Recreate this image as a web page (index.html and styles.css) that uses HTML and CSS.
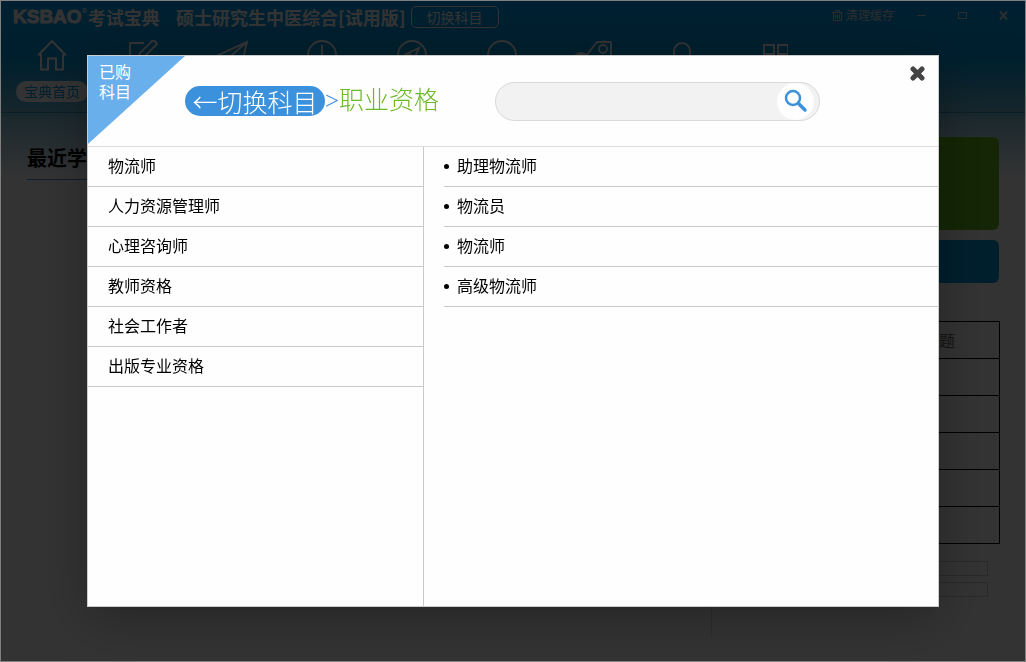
FILE: index.html
```html
<!DOCTYPE html>
<html lang="zh-CN">
<head>
<meta charset="utf-8">
<title>考试宝典</title>
<link rel="stylesheet" href="styles.css">
</head>
<body>
<div class="app">
  <header class="header">
    <div class="titlebar">
      <div class="brand"><span class="brand-en">KSBAO</span><sup class="brand-reg">®</sup><span class="brand-cn">考试宝典</span></div>
      <h1 class="subject">硕士研究生中医综合[试用版]</h1>
      <button class="switch" type="button">切换科目</button>
      <div class="tools">
        <button class="tool clear" type="button">
          <svg width="11" height="11" viewBox="0 0 11 11" fill="none" stroke="currentColor"><path d="M0 2.500h11M3.500 2.500v-2h4v2M1.500 2.500v8h8v-8M3.500 4.500v4M5.500 4.500v4M7.500 4.500v4"/></svg>
          <span>清理缓存</span>
        </button>
        <button class="tool" type="button" aria-label="最小化"><svg width="9" height="9" viewBox="0 0 9 9" stroke="currentColor"><path d="M0 4.500h9"/></svg></button>
        <button class="tool" type="button" aria-label="最大化"><svg width="9" height="9" viewBox="0 0 9 9" fill="none" stroke="currentColor"><path d="M.5 1.500h8v6h-8z"/></svg></button>
        <button class="tool" type="button" aria-label="关闭窗口"><svg width="9" height="9" viewBox="0 0 9 9" stroke="currentColor" stroke-width="2"><path d="M1 .5l7 8M8 .5l-7 8"/></svg></button>
      </div>
    </div>
    <nav class="nav">
      <a class="nav-item" href="#"><svg class="nav-icon" viewBox="0 0 32 32"><path d="M2 16.500L16 2l14 14.500M5 15v15.500h7v-11h8v11h7V15"/></svg><span class="nav-label">宝典首页</span></a>
      <a class="nav-item" href="#" aria-label="练习"><svg class="nav-icon" viewBox="0 0 32 32"><path d="M18 4H4v26h24V16M12 20l2-6L26 2q3-1 5 3L18 18z"/></svg></a>
      <a class="nav-item" href="#" aria-label="模拟"><svg class="nav-icon" viewBox="0 0 32 32"><path d="M31 3L0 17l10 4 3 9 5-6 7 4zM31 3L10 21"/></svg></a>
      <a class="nav-item" href="#" aria-label="记录"><svg class="nav-icon" viewBox="0 0 32 32"><circle cx="16" cy="16" r="14"/><path d="M16 6v11h8"/></svg></a>
      <a class="nav-item" href="#" aria-label="发现"><svg class="nav-icon" viewBox="0 0 32 32"><circle cx="16" cy="16" r="14"/><path d="M23 9l-5 11-3-4-5-1z"/></svg></a>
      <a class="nav-item" href="#" aria-label="搜索"><svg class="nav-icon" viewBox="0 0 32 32"><circle cx="16" cy="16" r="14"/></svg></a>
      <a class="nav-item" href="#" aria-label="优惠"><svg class="nav-icon wide" viewBox="0 0 40 32"><path d="M14 17L25 3h13q1 0 1 1v14L26 31z"/><circle cx="31" cy="10" r="4"/><circle cx="9" cy="22" r="8" fill="#fff"/></svg></a>
      <a class="nav-item" href="#" aria-label="我的"><svg class="nav-icon" viewBox="0 0 32 32"><path d="M8 17v-5a8 8 0 0 1 16 0v5a8 8 0 0 1-16 0zM3 31q4-8 13-8t13 8"/></svg></a>
      <a class="nav-item" href="#" aria-label="更多"><svg class="nav-icon" viewBox="0 0 32 32"><path d="M8 6h10v9H8zM22 6h10v9H22zM8 20h10v10H8zM22 20h10v10H22z"/></svg></a>
    </nav>
  </header>
  <main class="main">
    <section class="recent">
      <h2 class="recent-title">最近学习</h2>
    </section>
    <aside class="side">
      <div class="panel">
        <div class="card green"></div>
        <div class="card blue"></div>
        <table class="rank">
          <tr><th>做题</th></tr>
          <tr><td></td></tr><tr><td></td></tr><tr><td></td></tr><tr><td></td></tr><tr><td></td></tr>
        </table>
        <div class="bar"></div>
        <div class="bar"></div>
      </div>
    </aside>
  </main>
</div>
<div class="overlay">
  <section class="dialog" role="dialog" aria-label="切换科目">
    <header class="dialog-head">
      <button class="ribbon" type="button">已购<br>科目</button>
      <div class="crumbs"><button class="back" type="button">←切换科目</button><span class="sep">&gt;</span><span class="current">职业资格</span></div>
      <form class="search">
        <input class="search-input" type="text" aria-label="搜索科目">
        <button class="search-button" type="button" aria-label="搜索"><svg width="24" height="24" viewBox="0 0 24 24" fill="none" stroke="#3c91dc"><circle cx="9" cy="9" r="7" stroke-width="2.500"/><path d="M14.500 14.500l6.500 6.500" stroke-width="3.500" stroke-linecap="round"/></svg></button>
      </form>
      <button class="close" type="button" aria-label="关闭"><svg width="15" height="15" viewBox="0 0 15 15" stroke="#444" stroke-width="5" stroke-linecap="round"><path d="M3 3l9 9M12 3l-9 9"/></svg></button>
    </header>
    <div class="columns">
      <ul class="groups">
        <li class="row">物流师</li>
        <li class="row">人力资源管理师</li>
        <li class="row">心理咨询师</li>
        <li class="row">教师资格</li>
        <li class="row">社会工作者</li>
        <li class="row">出版专业资格</li>
      </ul>
      <ul class="subjects">
        <li class="row dot">助理物流师</li>
        <li class="row dot">物流员</li>
        <li class="row dot">物流师</li>
        <li class="row dot">高级物流师</li>
      </ul>
    </div>
  </section>
</div>
</body>
</html>
```
FILE: styles.css
```css
* { box-sizing: border-box; }
body {
  margin: 0;
  background: #fff;
  color: #000;
  font: 16px/20px "Noto Sans CJK SC", sans-serif;
}
button {
  margin: 0;
  padding: 0;
  border: 0;
  background: none;
  color: inherit;
  font: inherit;
}
h1, h2, ul { margin: 0; padding: 0; }
ul { list-style: none; }

.app {
  min-height: 100vh;
  overflow: hidden;
  background: linear-gradient(#009bf0 0, #009be1 60px, #70bcd8 112px, #90cce4 120px, #fff 178px);
}
.header {
  height: 113px;
  border-bottom: 1px solid #3c96be;
  color: #fff;
}
.titlebar {
  display: flex;
  align-items: center;
  height: 34px;
  padding: 0 18px 0 13px;
}
.brand { display: flex; align-items: center; width: 163px; }
.brand-en {
  font: 700 19px/20px "Liberation Sans", sans-serif;
  -webkit-text-stroke: 1px #fff;
}
.brand-reg { align-self: flex-start; font-size: 11px; line-height: 10px; }
.brand-cn { margin-left: 1px; font-size: 18px; font-weight: 700; }
.subject { font-size: 18px; line-height: 22px; font-weight: 700; white-space: nowrap; }
.switch {
  width: 88px;
  height: 22px;
  margin-left: 5px;
  border: 1px solid #fff;
  border-radius: 5px;
  font-size: 14px;
  line-height: 18px;
}
.tools {
  display: flex;
  align-items: center;
  gap: 32px;
  margin-left: auto;
  padding-bottom: 4px;
}
.tool { display: flex; align-items: center; color: #d8e4e8; }
.clear { gap: 3px; margin-right: -9px; font-size: 12px; }

.nav { display: flex; padding-left: 7px; }
.nav-item {
  display: flex;
  flex-direction: column;
  align-items: center;
  gap: 9px;
  width: 90px;
  padding-top: 4px;
  color: inherit;
  text-decoration: none;
}
.nav-icon { width: 32px; height: 34px; fill: none; stroke: #fff; stroke-width: 2; }
.nav-icon.wide { width: 40px; }
.nav-label {
  padding: 0 8px;
  border-radius: 11px;
  background: #fff;
  color: #009be1;
  font-size: 14px;
  line-height: 21px;
}

.main { display: flex; justify-content: space-between; padding: 24px 27px 0 27px; }
.recent { width: 60%; }
.recent-title {
  padding: 8px 0;
  border-bottom: 1px solid #3c91dc;
  font-size: 20px;
  line-height: 26px;
}
.side {
  height: 501px;
  border-left: 1px solid #ddd;
}
.panel { width: 287px; }
.card { margin-bottom: 10px; border-radius: 6px; }
.green { height: 93px; background: #64be1e; }
.blue { height: 43px; background: #009be1; }
.rank { width: 288px; margin: 38px 0 17px; border-collapse: collapse; }
.rank th, .rank td {
  height: 37px;
  padding: 0 44px;
  border: 1px solid #000;
  color: #666;
  font-weight: 400;
  text-align: right;
}
.bar { height: 15px; margin: 0 11px 6px 0; border: 1px solid #ccc; }

.overlay {
  position: fixed;
  inset: 0;
  display: flex;
  align-items: center;
  justify-content: center;
  border: 1px solid #808080;
  background: rgba(0, 0, 0, 0.8);
}
.dialog {
  display: flex;
  flex-direction: column;
  width: 90%;
  max-width: 852px;
  min-height: 552px;
  border: 1px solid #ccc;
  background: #fefefe;
  box-shadow: 0 10px 50px rgba(0, 0, 0, 0.3);
}
.dialog-head {
  display: flex;
  align-items: center;
  height: 91px;
  border-bottom: 1px solid #ddd;
}
.ribbon {
  align-self: flex-start;
  flex: none;
  display: flex;
  align-items: flex-start;
  width: 97px;
  height: 88px;
  padding: 5px 0 0 11px;
  background: #69afeb;
  clip-path: polygon(0 0, 100% 0, 0 100%);
  color: #fff;
  text-align: left;
}
.crumbs {
  display: flex;
  align-items: center;
  width: 310px;
  color: #3c91dc;
  font-family: "Liberation Serif", "Noto Sans CJK SC", serif;
  font-size: 25px;
  font-weight: 300;
  line-height: 30px;
  white-space: nowrap;
}
.back {
  width: 140px;
  height: 30px;
  border-radius: 15px;
  background: #3c91dc;
  color: #fff;
  font-family: "Noto Sans CJK SC", sans-serif;
}
.current { color: #6eb928; }
.search {
  display: flex;
  align-items: center;
  width: 325px;
  height: 39px;
  padding-right: 5px;
  border: 1px solid #d9d9d9;
  border-radius: 20px;
  background: #f2f2f2;
}
.search-input {
  flex: 1;
  min-width: 0;
  height: 100%;
  padding: 0 16px;
  border: 0;
  outline: 0;
  background: none;
  font: inherit;
}
.search-button {
  display: grid;
  place-items: center;
  width: 37px;
  height: 37px;
  border-radius: 50%;
  background: #fefefe;
}
.close { align-self: flex-start; display: flex; margin: 10px 13px 0 auto; }

.columns { display: flex; flex: 1; }
.groups { width: 336px; border-right: 1px solid #c8c8c8; }
.subjects { flex: 1; padding-left: 20px; }
.row {
  height: 40px;
  padding: 0 0 2px 20px;
  border-bottom: 1px solid #c8c8c8;
  line-height: 37px;
}
.dot { display: flex; align-items: center; gap: 8px; padding-left: 0; }
.dot::before {
  content: "";
  width: 5px;
  height: 5px;
  margin-top: 2px;
  border-radius: 50%;
  background: #000;
}
```
